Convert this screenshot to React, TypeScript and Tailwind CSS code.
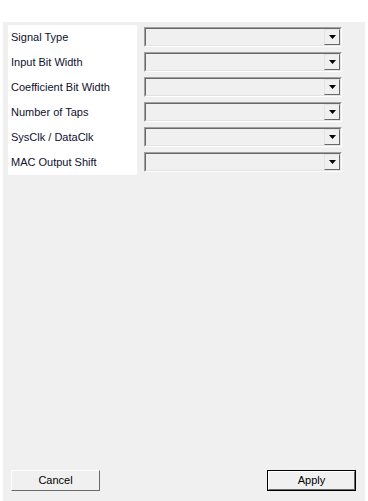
const labels = [
  'Signal Type',
  'Input Bit Width',
  'Coefficient Bit Width',
  'Number of Taps',
  'SysClk / DataClk',
  'MAC Output Shift',
];

const font = { fontFamily: '"Liberation Sans", Arial, sans-serif' };

const ComboBox = () => (
  <div className="h-[20px] w-[198px] border border-t-[#a0a0a0] border-l-[#a0a0a0] border-b-white border-r-white">
    <div className="flex h-full w-full justify-end border border-t-[#696969] border-l-[#696969] border-b-[#e3e3e3] border-r-[#e3e3e3] bg-[#f0f0f0]">
      <div className="flex h-full w-[16px] items-center justify-center border border-t-[#e3e3e3] border-l-[#e3e3e3] border-b-[#696969] border-r-[#696969] bg-[#f0f0f0]">
        <svg width="7" height="4" viewBox="0 0 7 4">
          <path d="M0 0H7L3.5 4Z" fill="#000" />
        </svg>
      </div>
    </div>
  </div>
);

const Button = ({ label, primary }: { label: string; primary?: boolean }) => (
  <div className={`h-[21px] w-[89px] ${primary ? 'border border-black' : ''}`}>
    <div className="flex h-full w-full items-center justify-center border border-t-white border-l-white border-b-[#696969] border-r-[#696969] bg-[#f0f0f0] text-[11px] text-black">
      {label}
    </div>
  </div>
);

export default function App() {
  return (
    <div className="flex h-[501px] w-[368px] flex-col bg-white pt-[22px]" style={font}>
      <div className="ml-[3px] flex w-[362px] flex-1 flex-col bg-[#f0f0f0] px-[5px] pt-[3px] pb-[10px]">
        <div className="flex items-start gap-[7px]">
          <div className="flex w-[129px] flex-col bg-white">
            {labels.map((l) => (
              <div key={l} className="flex h-[25px] items-center pl-[3px] text-[11px] text-[#101030]">
                {l}
              </div>
            ))}
          </div>
          <div className="flex flex-col gap-[5px] pt-[2px]">
            {labels.map((l) => (
              <ComboBox key={l} />
            ))}
          </div>
        </div>
        <div className="mt-auto flex justify-between pl-[3px] pr-[4px]">
          <Button label="Cancel" />
          <Button label="Apply" primary />
        </div>
      </div>
    </div>
  );
}
